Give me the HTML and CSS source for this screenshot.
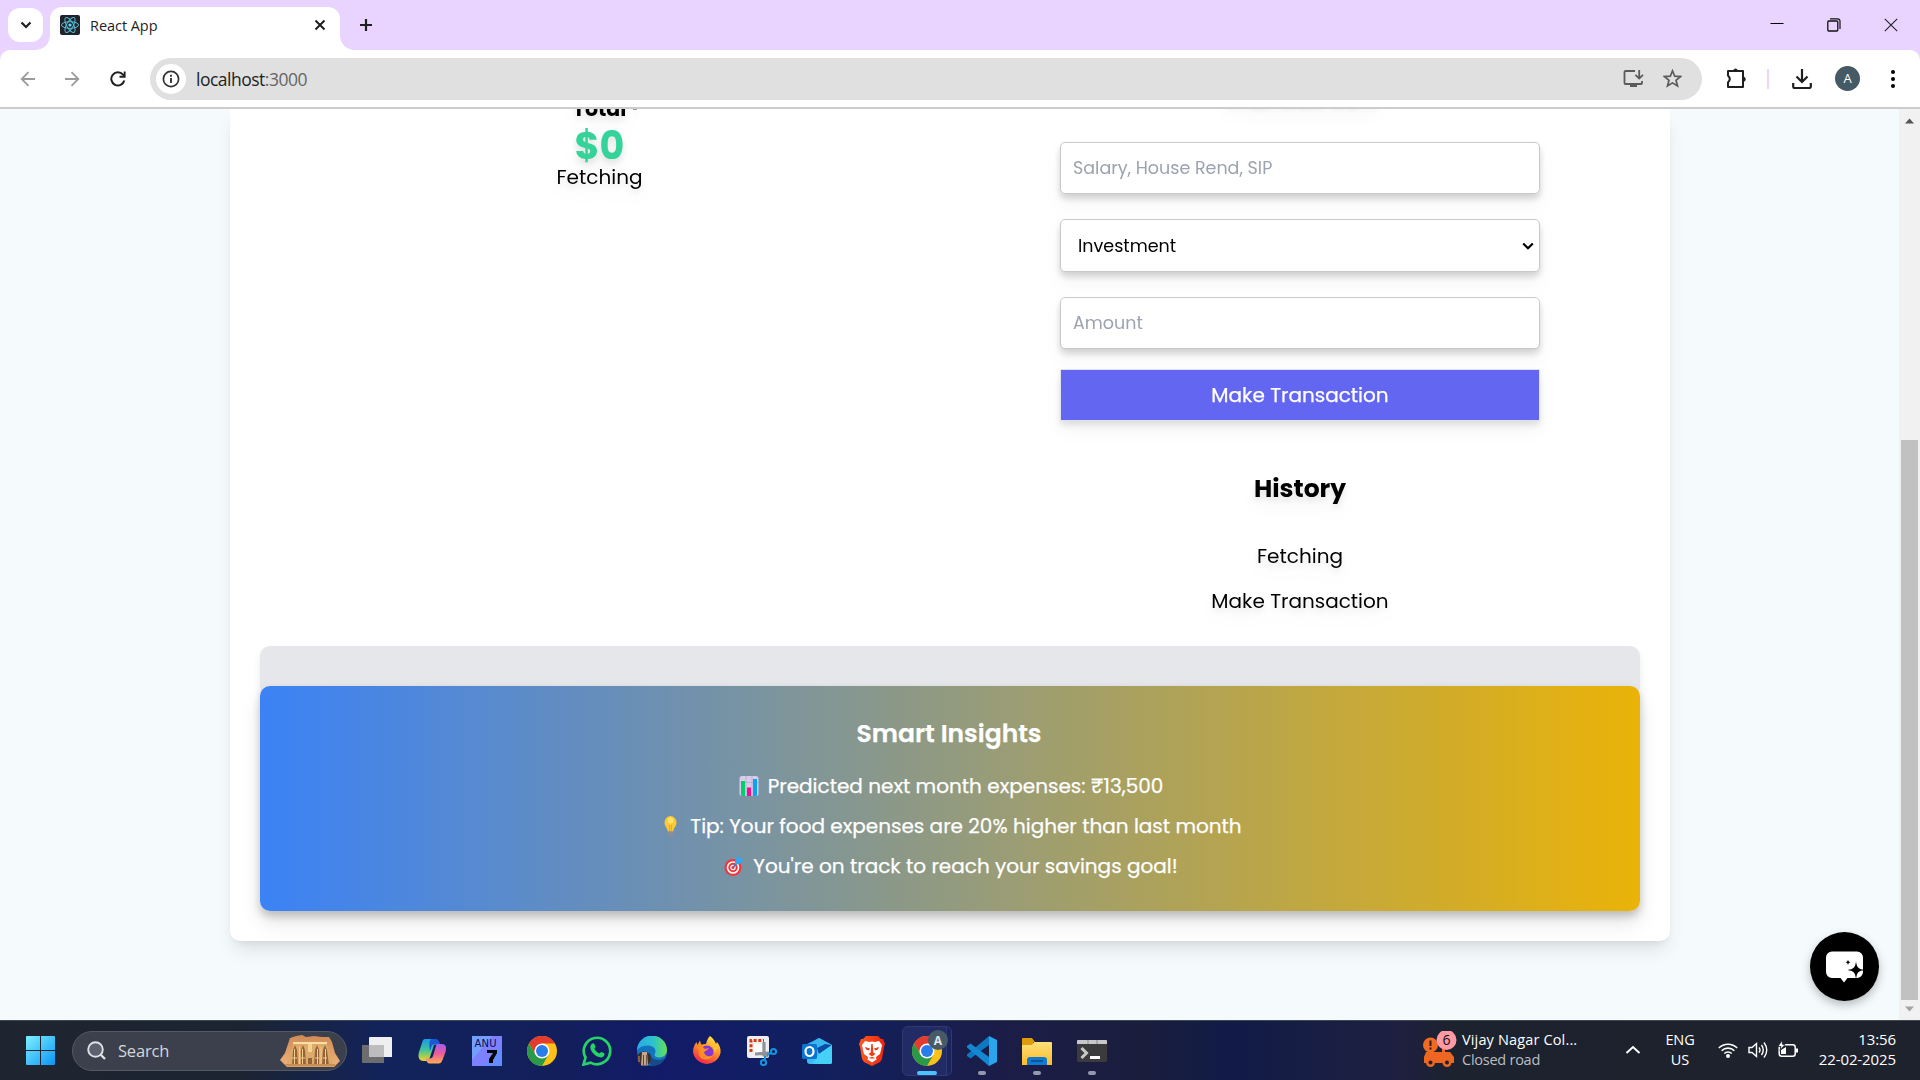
FILE: index.html
```html
<!DOCTYPE html>
<html lang="en">
<head>
<meta charset="utf-8">
<title>React App</title>
<link rel="stylesheet" href="styles.css">
</head>
<body>
<svg width="0" height="0" class="defs" aria-hidden="true">
  <defs>
    <linearGradient id="win" x1="0" y1="0" x2="1" y2="1"><stop offset="0" stop-color="#7df0ff"/><stop offset="1" stop-color="#0a95f5"/></linearGradient>
    <linearGradient id="sand" x1="0" y1="0" x2="0" y2="1"><stop offset="0" stop-color="#d08a55"/><stop offset="1" stop-color="#eeb479"/></linearGradient>
    <linearGradient id="copA" x1="0" y1="0" x2="0" y2="1"><stop offset="0" stop-color="#2098e8"/><stop offset=".5" stop-color="#3fc59a"/><stop offset="1" stop-color="#f3d322"/></linearGradient>
    <linearGradient id="copB" x1="0" y1="0" x2="0" y2="1"><stop offset="0" stop-color="#a45cf0"/><stop offset=".5" stop-color="#ee5c96"/><stop offset="1" stop-color="#ffae55"/></linearGradient>
    <linearGradient id="edge" x1="0" y1="0" x2="1" y2="0"><stop offset="0" stop-color="#2ba8e8"/><stop offset=".55" stop-color="#2cc3cb"/><stop offset="1" stop-color="#66e052"/></linearGradient>
    <linearGradient id="fox" x1=".8" y1="0" x2=".3" y2="1"><stop offset="0" stop-color="#fff04a"/><stop offset=".45" stop-color="#ff9626"/><stop offset="1" stop-color="#f5214f"/></linearGradient>
    <linearGradient id="fold" x1="0" y1="0" x2="0" y2="1"><stop offset="0" stop-color="#ffe07a"/><stop offset="1" stop-color="#fbbc2a"/></linearGradient>
    <linearGradient id="outl" x1="0" y1="0" x2="1" y2="1"><stop offset="0" stop-color="#1f9be8"/><stop offset="1" stop-color="#55dcff"/></linearGradient>
    <linearGradient id="brv" x1="0" y1="0" x2="1" y2="0"><stop offset="0" stop-color="#ff5a1f"/><stop offset="1" stop-color="#ee2410"/></linearGradient>
    <symbol id="chrome" viewBox="0 0 30 30">
      <circle cx="15" cy="15" r="15" fill="#fbc116"/>
      <path d="M15 15V7.5H28A15 15 0 0 0 2 7.5L8.500 18.800Z" fill="#e33b2e"/>
      <path d="M2 7.500A15 15 0 0 0 15 30L21.500 18.800 15 15 8.500 18.800Z" fill="#299a47"/>
      <circle cx="15" cy="15" r="7.600" fill="#fff"/><circle cx="15" cy="15" r="6" fill="#2a7de9"/>
    </symbol>
  </defs>
</svg>

<header class="tabstrip">
  <div class="tab-search"><svg width="12" height="8" viewBox="0 0 12 8"><path d="M1.500 1.500 6 6l4.500-4.500" fill="none" stroke="#1f1f1f" stroke-width="2.200"/></svg></div>
  <div class="tab">
    <svg width="20" height="20" viewBox="0 0 20 20"><rect width="20" height="20" rx="2" fill="#20232a"/><g fill="none" stroke="#55bcd4" stroke-width="1"><ellipse cx="10" cy="10" rx="8.500" ry="3.300"/><ellipse cx="10" cy="10" rx="8.500" ry="3.300" transform="rotate(60 10 10)"/><ellipse cx="10" cy="10" rx="8.500" ry="3.300" transform="rotate(120 10 10)"/></g><circle cx="10" cy="10" r="1.600" fill="#61dafb"/></svg>
    <span class="tab-title">React App</span>
    <svg class="tab-close" width="12" height="12" viewBox="0 0 12 12"><path d="m1.500 1.500 9 9m0-9-9 9" stroke="#1f1f1f" stroke-width="2"/></svg>
  </div>
  <svg class="new-tab" width="14" height="14" viewBox="0 0 14 14"><path d="M7 1v12M1 7h12" stroke="#1f1f1f" stroke-width="2.200"/></svg>
  <div class="window-controls">
    <svg width="14" height="14" viewBox="0 0 14 14"><path d="M.5 5.500h13" stroke="#000" stroke-width="1"/></svg>
    <svg width="14" height="14" viewBox="0 0 14 14"><path d="M3 .800h7.500a2.500 2.500 0 0 1 2.500 2.500V11" fill="none" stroke="#111" stroke-width="1.200"/><rect x=".8" y="3" width="10" height="10" rx="1" fill="none" stroke="#111" stroke-width="1.300"/></svg>
    <svg width="14" height="14" viewBox="0 0 14 14"><path d="m.800.800 12.400 12.400m0-12.400L.800 13.200" stroke="#222" stroke-width="1.100"/></svg>
  </div>
</header>

<div class="toolbar-wrap">
<div class="toolbar">
  <div class="nav-buttons">
    <svg width="16" height="16" viewBox="0 0 16 16"><path d="M15 8H2m6.500-6.800L1.700 8l6.800 6.800" fill="none" stroke="#9b9b9b" stroke-width="1.800"/></svg>
    <svg width="16" height="16" viewBox="0 0 16 16"><path d="M0 8h13M6.500 1.200 13.300 8l-6.800 6.800" fill="none" stroke="#9b9b9b" stroke-width="1.800"/></svg>
    <svg width="16" height="16" viewBox="0 0 16 16"><path d="M14.300 9.500a6.600 6.600 0 1 1-1.300-5.800l1.500 1.700" fill="none" stroke="#1f1f1f" stroke-width="2"/><path d="M15.600.500v6.200H9.500V4.800h4.200V.500z" fill="#1f1f1f"/></svg>
  </div>
  <div class="omnibox">
    <div class="site-info"><svg width="18" height="18" viewBox="0 0 18 18"><circle cx="9" cy="9" r="7.600" fill="none" stroke="#333" stroke-width="1.700"/><path d="M9 8v5M9 4.800v1.900" stroke="#333" stroke-width="1.900"/></svg></div>
    <span class="url">localhost<span class="port">:3000</span></span>
    <svg class="install" width="21" height="19" viewBox="0 0 21 19"><path d="M12 2H2.500a1 1 0 0 0-1 1v11a1 1 0 0 0 1 1H18a1 1 0 0 0 1-1v-2" fill="none" stroke="#5a5a5a" stroke-width="1.800"/><path d="M7 15h7v3H7z" fill="#5a5a5a"/><path d="M16.200 1v8.500m-3.800-3.700 3.800 3.800L20 5.800" fill="none" stroke="#5a5a5a" stroke-width="1.800"/></svg>
    <svg width="19" height="19" viewBox="0 0 19 19"><path d="m9.500 1.800 2.200 5.400 5.800.4-4.500 3.700 1.500 5.700-5-3.100-5 3.100L6 11.300 1.500 7.600l5.800-.4z" fill="none" stroke="#5a5a5a" stroke-width="1.700"/></svg>
  </div>
  <div class="actions">
    <svg width="21" height="22" viewBox="0 0 21 22"><path d="M2 3h15v16H2v-4.500q3.500-3.500 0-7z" fill="none" stroke="#1f1f1f" stroke-width="2" stroke-linejoin="round"/><path d="M7.500 3a2 2 0 0 1 4 0zM17 9a2.200 2.200 0 0 1 0 4.500z" fill="#1f1f1f" stroke="#1f1f1f"/></svg>
    <span class="separator"></span>
    <svg width="20" height="20" viewBox="0 0 20 20"><path d="M10 0v12.500M4.500 7.500 10 13l5.500-5.500M1.200 14v3.500a1.500 1.500 0 0 0 1.500 1.500h14.600a1.500 1.500 0 0 0 1.500-1.500V14" fill="none" stroke="#1f1f1f" stroke-width="2.200"/></svg>
    <span class="avatar">A</span>
    <svg width="4" height="18" viewBox="0 0 4 18"><circle cx="2" cy="2" r="2"/><circle cx="2" cy="9" r="2"/><circle cx="2" cy="16" r="2"/></svg>
  </div>
</div>
</div>

<div class="viewport">
  <main class="page">
    <div class="card">
      <div class="columns">
        <section class="summary">
          <h3 class="total">Total<span class="dot"></span></h3>
          <span class="total-value">$0</span>
          <span class="summary-status">Fetching</span>
        </section>
        <section class="side">
          <h1 class="side-title">Transaction</h1>
          <form class="form">
            <div class="field placeholder"><span>Salary, House Rend, SIP</span></div>
            <div class="field select"><span>Investment</span><svg width="12" height="8" viewBox="0 0 12 8"><path d="M1.200 1.500 6 6.200l4.800-4.700" fill="none" stroke="#000" stroke-width="2.300"/></svg></div>
            <div class="field placeholder"><span>Amount</span></div>
            <div class="submit"><span>Make Transaction</span></div>
          </form>
          <h2 class="history">History</h2>
          <p class="history-status">Fetching</p>
          <p class="history-item">Make Transaction</p>
        </section>
      </div>
      <div class="strip"></div>
      <section class="insights">
        <h2 class="insights-title">Smart Insights</h2>
        <p class="tip"><svg width="20" height="22" viewBox="0 0 20 22"><rect x=".5" y="1" width="19" height="20" rx="2.500" fill="#d9cce9"/><path d="M7 1v20M13 1v20M1 7.500h18" stroke="#b6a7cf" stroke-width=".8"/><path d="M2 6h4v15H3a1 1 0 0 1-1-1z" fill="#00ce6f"/><path d="M8 12.500h4V21H8z" fill="#ee108c"/><path d="M14 4h4v16a1 1 0 0 1-1 1h-3z" fill="#08a4f0"/></svg><span>Predicted next month expenses: ₹13,500</span></p>
        <p class="tip idea"><svg width="13" height="22" viewBox="0 0 14 22" preserveAspectRatio="none"><path d="M7 1a6.500 6.500 0 0 1 6.500 6.500c0 3.800-3.300 5-3.500 9H4c-.200-4-3.500-5.200-3.500-9A6.500 6.500 0 0 1 7 1Z" fill="#fbc934"/><circle cx="7" cy="5.500" r="3" fill="#ffe467"/><path d="M6 10v6M8 10v6" stroke="#e2a020" stroke-width=".8"/><path d="M4 16.500h6v3L8.500 21.500h-3L4 19.500z" fill="#8d8c99"/></svg><span>Tip: Your food expenses are 20% higher than last month</span></p>
        <p class="tip"><svg width="20" height="22" viewBox="0 0 20 22"><circle cx="9" cy="12.500" r="8.500" fill="#f3353c"/><circle cx="9" cy="12.500" r="6.300" fill="#fff"/><circle cx="9" cy="12.500" r="4.700" fill="#f3353c"/><circle cx="9" cy="12.500" r="2.700" fill="#fff"/><circle cx="9" cy="12.500" r="1.500" fill="#f3353c"/><path d="m9 12.500 7-8" stroke="#2c78c9" stroke-width="1.600"/><path d="m11 8 .5-4 4-3.800.5 3.500 3.800.8-3.800 4-4 1.500z" fill="#30a9f2"/></svg><span>You're on track to reach your savings goal!</span></p>
      </section>
    </div>
    <div class="chat"><svg width="42" height="34" viewBox="0 0 42 34"><path d="M8 1.500h25a6 6 0 0 1 6 6V22a6 6 0 0 1-6 6h-9.500L20 32.500 16.500 28H8a6 6 0 0 1-6-6V7.500a6 6 0 0 1 6-6Z" fill="#fff"/><path d="M32 11.500c1 6.500 2.500 7.500 8.500 8.500-6 1-7.500 2-8.500 9-1-7-2.500-8-8.500-9 6-1 7.500-2 8.500-8.500ZM24 10q.400 2 2.400 2.300Q24.400 12.600 24 15q-.400-2.400-2.400-2.700Q23.600 12 24 10Z" fill="#000"/></svg></div>
  </main>
  <aside class="scrollbar">
    <svg width="9" height="6" viewBox="0 0 9 6"><path d="M0 5.500 4.500.500 9 5.500z" fill="#555"/></svg>
    <div class="thumb"></div>
    <svg width="9" height="6" viewBox="0 0 9 6"><path d="M0 .500 4.500 5.500 9 .500z" fill="#a3a3a3"/></svg>
  </aside>
</div>

<footer class="taskbar">
  <svg width="29" height="29" viewBox="0 0 29 29"><path d="M1 0h13v14H0V1a1 1 0 0 1 1-1ZM15 0h13a1 1 0 0 1 1 1v13H15ZM0 15h14v14H1a1 1 0 0 1-1-1ZM15 15h14v13a1 1 0 0 1-1 1H15Z" fill="url(#win)"/></svg>
  <div class="search">
    <svg width="19" height="19" viewBox="0 0 19 19"><circle cx="8.500" cy="8.500" r="7.300" fill="#5b616e" stroke="#dfe1e5" stroke-width="1.900"/><path d="m13.500 13.500 4.500 4.500" stroke="#dfe1e5" stroke-width="2.400"/></svg>
    <span class="search-label">Search</span>
    <svg class="temple" width="60" height="32" viewBox="0 0 60 32"><path d="M0 25 5 18 10 3 16 1 22 0l4 2 8-1 8 1 7 0 3 5 3 11 5 8-6 6H7z" fill="url(#sand)"/><path d="M14 7h32l8 24H6z" fill="#dcab69"/><path d="M13 7h34v2H13z" fill="#f9dfa5"/><g fill="#94633a"><path d="M12 31l1-16 2-5 2 5 1 16zM21 31V15l2-5 2 5 1 16zM34 31l1-16 2-5 2 5v16zM42 31l1-16 2-5 2 5 2 16zM28 23h4v8h-4z"/></g><g stroke="#f3cc8d" stroke-width="1"><path d="M12 23h5M21 23h4M35 23h4M43 23h4M14.500 14v17M22.500 14v17M37.500 14v17M45.500 14v17M19.500 12v19M41 12v19"/></g><path d="M28 9h4v8h-4z" fill="#f3d391"/><path d="M5 29h50v2.500H7z" fill="#c98f50"/></svg>
  </div>
  <nav class="apps">
    <div class="app"><svg width="30" height="30" viewBox="0 0 30 30"><path d="M0 9h22v18H1a1 1 0 0 1-1-1z" fill="#6d6d70"/><path d="M8 1h21a1 1 0 0 1 1 1v19H7V2a1 1 0 0 1 1-1Z" fill="#efefef"/><path d="M7 9h15v12H7z" fill="#bdbdbf"/></svg></div>
    <div class="app"><svg width="30" height="30" viewBox="0 0 30 30"><path d="M8 3h9c3 0 4 2 5 5l-5 1-4 12c-1 3-2 4-4 4H7c-6 0-6-5-5-9l3-9c.600-2.500 1.500-4 3-4Z" fill="url(#copA)"/><path d="M15 3h3c3 0 4 2 5 5h-4c-3 0-4 1-4.500 2.500L13 15c-1-6-1-12 2-12Z" fill="#1b58d6"/><path d="M20 8h5c4.500 0 4.500 4 3.500 8l-3 8c-1 2.500-2 3.500-4 3.500H13c-2.500 0-3.500-2-4.500-5h4c2 0 3-1 3.500-2.500L19 10c.300-1 .5-2 1-2Z" fill="url(#copB)"/></svg></div>
    <div class="app"><svg width="30" height="30" viewBox="0 0 30 30"><path d="M0 0h30v30H0z" fill="#7d81ff"/><path d="M0 0h20L0 24z" fill="#74a0fb"/><path d="M30 9v21H11z" fill="#648bff"/><text x="2.500" y="11" class="anu" textLength="22">ANU</text><path d="M15 14h10v3l-4 7v3h-4v-4l4-6h-6z" fill="#000"/></svg></div>
    <div class="app"><svg width="30" height="30"><use href="#chrome"/></svg></div>
    <div class="app"><svg width="30" height="30" viewBox="0 0 30 30"><path d="m1.500 28.500 2-7A13.200 13.200 0 1 1 8.700 26.600Z" fill="none" stroke="#25d366" stroke-width="2.700"/><path d="M10.500 7.500c1-.600 1.700 0 2 .8l1 2.300c.300.900-1.200 1.600-.900 2.400 1 2 2.500 3.400 4.600 4.300.8.300 1.500-1.500 2.300-1.300l2.600 1.300c1 .600.100 3.700-2.500 4.100-4.500.700-11.300-5-11.300-10.300 0-1.600 1-3 2.200-3.600Z" fill="#25d366"/></svg></div>
    <div class="app"><svg width="30" height="30" viewBox="0 0 30 30"><circle cx="15" cy="15" r="15" fill="#1473bf"/><path d="M0 15A15 15 0 0 1 30 14c0 5-4 7.500-8 7.500-3 0-4.500-1.500-4.500-2.500 0-1.500 1-1.500 1-4 0-3-3-5.500-8-5.500-6 0-9.500 3-10.500 5.500Z" fill="url(#edge)"/><path d="M13 16c0 6 6 11 15.500 6-3 6-8.500 8-13.500 8-4-2-5-10-2-14Z" fill="#174a86"/><circle cx="7" cy="22.500" r="7" fill="#3a2d2a"/><path d="M5 16h5l1 13.500H4z" fill="#c4a78d"/><path d="M6 19h1v10H6zM9 19h.8v10H9z" fill="#604636"/><path d="M1 20h2v6H1z" fill="#84604a"/></svg></div>
    <div class="app"><svg width="30" height="30" viewBox="0 0 30 30"><path d="M18 0c3 2 5 5 6 8l1-2c3 4 4 7 3.500 11A14 14 0 0 1 1 16C1 11 3 8 4.500 6l1 3L8 4.500l1 4 5-.5c1-4 2-6 4-8Z" fill="url(#fox)"/><circle cx="15" cy="16" r="6.500" fill="#8537d5"/><path d="M5 11c4-1 6 0 8 2l4-1c-1 2-4 3-5 4 1 5 6 5 9 3-2 6-12 6-14 0-.700-3 0-6-2-8Z" fill="#ff8f24"/><path d="M17 8c3 1 6 4 5.500 9l3-5-3-5z" fill="#ffc22e"/></svg></div>
    <div class="app"><svg width="30" height="30" viewBox="0 0 30 30"><rect width="22" height="22" rx="2" fill="#edeef2"/><path d="M4 16V4.500h13" fill="none" stroke="#d93a0c" stroke-width="3" stroke-dasharray="3 1.700"/><path d="M7 8h8v9H7z" fill="#fff"/><path d="M17 6v13l4 1M8 18l14-1" fill="none" stroke="#8f9298" stroke-width="3.200"/><g fill="none" stroke="#1594df" stroke-width="2"><circle cx="26.500" cy="15.500" r="2.600"/><circle cx="16.500" cy="26.500" r="2.600"/><path d="m24 17-4 2M18 24v-4"/></g></svg></div>
    <div class="app"><svg width="30" height="30" viewBox="0 0 30 30"><path d="m5 8 12-6 13 7v17a2 2 0 0 1-2 2H8a3 3 0 0 1-3-3z" fill="url(#outl)"/><path d="M17 2 30 9 17 17 5 10z" fill="#37b8ee"/><path d="m15 12 8-4 7 1-13 9z" fill="#0a4da8"/><path d="M17 18 30 9v17a2 2 0 0 1-2 2H11z" fill="#45d1f7"/><rect y="8" width="15" height="15" rx="1.500" fill="#0875d3"/><ellipse cx="7.500" cy="15.500" rx="4" ry="4.500" fill="none" stroke="#fff" stroke-width="2.200"/></svg></div>
    <div class="app"><svg width="30" height="30" viewBox="0 0 30 30"><path d="M9 0h12l3 3h2l2 5-1 3-2 12-2 3-8 4-8-4-2-3-2-12-1-3 2-5h2z" fill="url(#brv)"/><path d="m8 5 4 1 3-.500 3 .5 4-1 3 4-1 5-1 4-4 3 .5 2.500-4.500 3-4.500-3L11 21l-4-3-1-4-1-5z" fill="#fff"/><path d="m8 11 5 1.500-1 2-3-1zM22 11l-5 1.500 1 2 3-1zM14.300 8h1.400l.6 8.500 2.200 1.500-3.500 2.500-3.500-2.500 2.200-1.500zM11.500 22l3.500-1 3.500 1-3.500.8z" fill="#f23b18"/></svg></div>
    <div class="app"><div class="active"><svg width="42" height="38" viewBox="0 0 42 38"><use href="#chrome" x="3" y="6" width="30" height="30"/><circle cx="29" cy="10" r="10" fill="#465b67"/><text x="29" y="14.500" class="badge-a">A</text></svg></div><span class="run wide"></span></div>
    <div class="app"><svg width="30" height="30" viewBox="0 0 30 30"><path d="M22 0 30 4v22l-8 4z" fill="#2aa5ed"/><path d="M22 0v9L3.500 22.500 0 20v-1.500z" fill="#0e78c0"/><path d="M22 30v-9L3.500 7.500 0 10v1.500z" fill="#1487d0"/></svg><span class="run"></span></div>
    <div class="app"><svg width="30" height="30" viewBox="0 0 30 30"><path d="M0 3a1 1 0 0 1 1-1h9l3 4h-2v5H0z" fill="#df9b0c"/><path d="M12 6h17a1 1 0 0 1 1 1v22H0V9h10z" fill="url(#fold)"/><path d="M5 29v-5a3 3 0 0 1 3-3h14a3 3 0 0 1 3 3v5z" fill="#1179d0"/><path d="M9 25h12" stroke="#0a4a8c" stroke-width="1.500"/></svg><span class="run"></span></div>
    <div class="app"><svg width="30" height="30" viewBox="0 0 30 30"><rect y="4" width="30" height="22" rx="1.500" fill="#3b3b3d"/><path d="M1 4h28a1 1 0 0 1 1 1v3H0V5a1 1 0 0 1 1-1Z" fill="#c8c8ca"/><path d="M11 4v4M20 4v4" stroke="#8c8c8f"/><path d="m4.500 12 5 5-5 5" fill="none" stroke="#c9c9c9" stroke-width="3"/><path d="M13 20h10v3H13z" fill="#fff"/></svg><span class="run"></span></div>
  </nav>
  <div class="tray">
    <div class="traffic">
      <svg width="36" height="38" viewBox="0 0 36 38"><circle cx="8.500" cy="14" r="7.500" fill="#f26a21"/><path d="M8.500 9.500v5.500M8.500 16.500v2" stroke="#1c222e" stroke-width="2"/><path d="M4 21h24l4 5v6H2v-6z" fill="#ee6722"/><path d="M20 22v-4h3v4z" fill="#ee6722"/><circle cx="8.500" cy="31.500" r="4.500" fill="#ee6722"/><circle cx="25" cy="31.500" r="4.500" fill="#ee6722"/><circle cx="8.500" cy="31.500" r="2" fill="#1c222e"/><circle cx="25" cy="31.500" r="2" fill="#1c222e"/><circle cx="24.500" cy="9" r="10" fill="#ff99a4"/><text x="24.500" y="14" class="count">6</text></svg>
      <div class="traffic-text"><span class="place">Vijay Nagar Col...</span><span class="muted">Closed road</span></div>
    </div>
    <svg width="16" height="10" viewBox="0 0 16 10"><path d="m1.500 8 6.500-6 6.500 6" fill="none" stroke="#fff" stroke-width="2"/></svg>
    <div class="lang"><span>ENG</span><span>US</span></div>
    <div class="status">
      <svg width="20" height="20" viewBox="0 0 20 20"><g fill="none" stroke="#fff" stroke-width="1.600"><path d="M.8 8a13 13 0 0 1 18.400 0M3.600 10.800a9 9 0 0 1 12.800 0M6.300 13.500a5.300 5.300 0 0 1 7.400 0"/></g><circle cx="10" cy="16" r="2" fill="#fff"/></svg>
      <svg width="20" height="20" viewBox="0 0 20 20"><g fill="none" stroke="#fff" stroke-width="1.400"><path d="M1 7.500h3L8.500 3.500v13L4 12.500H1z"/><path d="M11 7.500q2 2.500 0 5M13.500 5q3.500 5 0 10M16 2.500q5.500 7.500 0 15"/></g></svg>
      <svg width="20" height="20" viewBox="0 0 20 20"><rect x="1.200" y="4.700" width="16" height="11.500" rx="2.500" fill="none" stroke="#fff" stroke-width="1.500"/><path d="M17.500 8.500H20v4h-2.500zM3 10l5-3v7H3z" fill="#fff"/><path d="M4 .500 0 6.500h3l-1 4 5-6H4.500z" fill="#fff" stroke="#1c222e" stroke-width=".8"/></svg>
    </div>
    <div class="clock"><span>13:56</span><span>22-02-2025</span></div>
  </div>
</footer>
</body>
</html>
```
FILE: styles.css
```css
* { box-sizing: border-box; }
body {
  margin: 0;
  width: 1920px;
  height: 1080px;
  overflow: hidden;
  display: flex;
  flex-direction: column;
  font-family: "Open Sans", "Noto Sans", sans-serif;
  background: #fff;
}
svg { display: block; flex: none; }
h1, h2, h3, p { margin: 0; }
.defs { position: absolute; }

/* Tab strip */
.tabstrip {
  height: 50px;
  flex: none;
  display: flex;
  align-items: center;
  padding-left: 8px;
  background: #e8d4ff;
}
.tab-search {
  width: 35px;
  height: 34px;
  border-radius: 12px;
  background: #fff;
  display: flex;
  align-items: center;
  justify-content: center;
}
.tab {
  position: relative;
  align-self: flex-end;
  width: 290px;
  height: 43px;
  margin-left: 7px;
  padding: 0 14px 7px 10px;
  border-radius: 12px 12px 0 0;
  background: #fff;
  display: flex;
  align-items: center;
}
.tab::before, .tab::after {
  content: "";
  position: absolute;
  bottom: 0;
  width: 14px;
  height: 14px;
}
.tab::before { left: -14px; background: radial-gradient(circle at 0 0, transparent 13.500px, #fff 14px); }
.tab::after { right: -14px; background: radial-gradient(circle at 100% 0, transparent 13.500px, #fff 14px); }
.tab-title { margin-left: 10px; font-size: 14.500px; letter-spacing: -0.05px; color: #1f1f1f; }
.tab-close { margin-left: auto; }
.new-tab { margin-left: 19px; }
.window-controls { margin-left: auto; margin-right: 22px; display: flex; gap: 43px; }

/* Toolbar */
.toolbar-wrap { height: 59px; flex: none; background: #e8d4ff; }
.toolbar {
  height: 59px;
  border-radius: 10px 10px 0 0;
  border-bottom: 2px solid #ccc;
  background: #fff;
  display: flex;
  align-items: center;
  padding-left: 20px;
}
.nav-buttons { display: flex; gap: 29px; margin-right: 24px; }
.omnibox {
  width: 1552px;
  height: 42px;
  border-radius: 21px;
  background: #e0e0e0;
  display: flex;
  align-items: center;
  padding: 0 20px 0 6px;
}
.site-info {
  width: 30px;
  height: 30px;
  border-radius: 50%;
  background: #fff;
  display: flex;
  align-items: center;
  justify-content: center;
}
.url { margin-left: 10px; font-size: 17.500px; letter-spacing: -0.5px; color: #1f1f1f; }
.port { color: #666; }
.install { margin-left: auto; margin-right: 19px; }
.actions { display: flex; align-items: center; margin-left: 24px; }
.separator { width: 2px; height: 20px; margin: 0 23px 0 20px; background: #e8d4ff; }
.avatar {
  width: 25px;
  height: 25px;
  margin: 0 31px 0 23px;
  border-radius: 50%;
  background: #455a64;
  color: #fff;
  font-size: 13px;
  line-height: 25px;
  text-align: center;
}

/* Page */
.viewport { height: 911px; flex: none; display: flex; overflow: hidden; }
.page {
  position: relative;
  flex: 1;
  padding-left: 230px;
  overflow: hidden;
  background: #f5fafd;
  font-family: Poppins, Inter, sans-serif;
  color: #000;
}
.card {
  width: 1440px;
  height: 832px;
  padding: 0 30px;
  border-radius: 0 0 10px 10px;
  background: #fff;
  box-shadow: 0 12px 19px -4px rgba(0, 0, 0, .1), 0 5px 8px -5px rgba(0, 0, 0, .1);
}
.columns {
  height: 537px;
  display: grid;
  grid-template-columns: 679px 680px;
  gap: 21px;
  text-align: center;
  font-size: 20px;
  filter: drop-shadow(0 10px 8px rgba(0, 0, 0, .04)) drop-shadow(0 4px 3px rgba(0, 0, 0, .1));
}
.summary { display: flex; flex-direction: column; align-items: center; margin-top: -12px; }
.total { position: relative; font-size: 20.500px; line-height: 24px; font-weight: 700; }
.dot {
  position: absolute;
  right: -11px;
  top: 11px;
  width: 4px;
  height: 2px;
  background: #999;
}
.total-value { margin-top: 1px; font-size: 38px; line-height: 48px; font-weight: 700; color: #34d399; }
.summary-status { margin-top: -1px; line-height: 16px; }
.side { display: flex; flex-direction: column; align-items: center; margin-top: -24px; }
.side-title { font-size: 25px; line-height: 24px; font-weight: 700; }
.form { width: 480px; margin-top: 33px; display: flex; flex-direction: column; }
.field {
  height: 52px;
  margin-bottom: 25px;
  padding: 0 12px;
  border: 1px solid #c9c9cb;
  border-radius: 5px;
  background: #fff;
  display: flex;
  align-items: center;
  font-size: 17.500px;
  box-shadow: 0 5px 9px rgba(0, 0, 0, .07);
}
.placeholder { color: #9ca3af; }
.select { height: 53px; padding: 0 5px 0 17px; justify-content: space-between; }
.submit {
  height: 52px;
  margin-top: -5px;
  border: 1px solid #e2e3ea;
  background: #6366f1;
  color: #fff;
  line-height: 50px;
  -webkit-text-stroke: .25px #fff;
}
.history { margin-top: 52px; font-size: 25px; line-height: 32px; font-weight: 700; }
.history-status { margin-top: 35px; line-height: 32px; }
.history-item { margin-top: 13px; line-height: 32px; }
.strip {
  height: 50px;
  margin-bottom: -10px;
  border-radius: 10px;
  background: #e5e7eb;
  box-shadow: 0 5px 8px rgba(0, 0, 0, .08);
}
.insights {
  position: relative;
  height: 225px;
  padding-top: 32px;
  border-radius: 10px;
  background: linear-gradient(90deg, #3b82f6, #eab308);
  box-shadow: 0 5px 8px rgba(0, 0, 0, .2), 0 12px 20px rgba(0, 0, 0, .1);
  color: #fff;
  font-size: 20px;
  text-align: center;
  -webkit-text-stroke: .25px #fff;
}
.insights-title { margin: 0 2px 16px 0; font-size: 25px; line-height: 32px; font-weight: 600; }
.tip { height: 40px; padding-left: 2px; display: flex; justify-content: center; align-items: center; gap: 9px; }
.tip.idea { padding-left: 6px; gap: 13px; }
.chat {
  position: absolute;
  left: 1810px;
  top: 823px;
  width: 69px;
  height: 69px;
  padding-left: 1px;
  border-radius: 50%;
  background: #000;
  box-shadow: 0 4px 10px rgba(0, 0, 0, .25);
  display: flex;
  align-items: center;
  justify-content: center;
}
.scrollbar {
  width: 21px;
  background: #f1f1f1;
  display: flex;
  flex-direction: column;
  align-items: center;
  padding: 9px 0 8px;
}
.thumb { width: 17px; height: 560px; margin-top: 316px; margin-bottom: auto; background: #c1c1c1; }

/* Taskbar */
.taskbar {
  height: 60px;
  flex: none;
  display: flex;
  align-items: center;
  padding: 0 24px 0 26px;
  border-top: 1px solid #3d4852;
  background: linear-gradient(90deg, #1f2530 0, #1c2432 240px, #12235a 380px, #121f5c 560px, #111b68 660px, #12205e 830px, #1b1d48 1000px, #1a1e3c 1140px, #111b47 1230px, #1e2040 1400px, #1c222e 1450px, #1e222c 1920px);
  color: #fff;
  font-size: 14.500px;
}
.search {
  width: 275px;
  height: 40px;
  margin: 0 2px 0 17px;
  padding: 0 6px 0 14px;
  border: 1px solid #535966;
  border-radius: 20px;
  background: #3b404c;
  display: flex;
  align-items: center;
}
.search-label { margin-left: 12px; font-size: 16.500px; letter-spacing: -0.2px; color: #d5d7da; }
.temple { margin-left: auto; }
.apps { display: flex; height: 100%; }
.app {
  position: relative;
  width: 55px;
  display: flex;
  align-items: center;
  justify-content: center;
}
.run {
  position: absolute;
  bottom: 5px;
  left: 24px;
  width: 8px;
  height: 4px;
  border-radius: 2px;
  background: #9699ae;
}
.run.wide { left: 18px; width: 20px; background: #4cc2ff; }
.active {
  width: 50px;
  height: 50px;
  border: 1px solid #303a72;
  border-radius: 6px;
  background: linear-gradient(90deg, #222b66 43px, #303a72 43px, #303a72 44px, #1b245c 44px);
  padding: 3px 0 0 6px;
}
.anu { font: 10px "DejaVu Sans", sans-serif; fill: #0a0a60; }
.badge-a { font: 700 12px "Open Sans", sans-serif; fill: #e3e6e8; text-anchor: middle; }
.count { font: 14px "Open Sans", sans-serif; fill: #111; text-anchor: middle; }
.tray { margin-left: auto; margin-bottom: 2px; display: flex; align-items: center; }
.traffic { width: 203px; display: flex; align-items: center; }
.traffic-text { margin-left: 4px; display: flex; flex-direction: column; line-height: 20px; white-space: nowrap; letter-spacing: -0.25px; }
.place { letter-spacing: .15px; }
.muted { color: #bcbec2; }
.lang { width: 77px; padding-left: 1px; display: flex; flex-direction: column; line-height: 20px; text-align: center; letter-spacing: -0.1px; }
.status { display: flex; gap: 10px; }
.clock { width: 98px; margin-bottom: 2px; display: flex; flex-direction: column; line-height: 20px; text-align: right; font-size: 15px; letter-spacing: -0.1px; }
```
